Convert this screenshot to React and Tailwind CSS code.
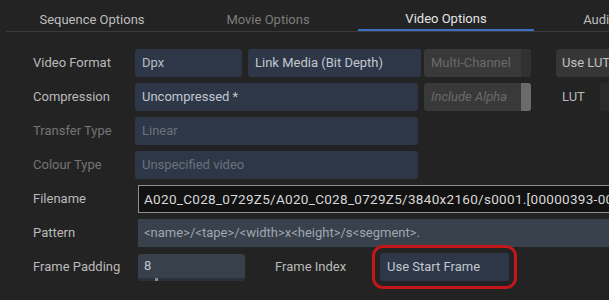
import React from 'react'

const font = { fontFamily: 'Roboto, "Noto Sans", sans-serif' }

const tabs = [
  { label: 'Sequence Options', cls: 'text-[#bdbdbd]' },
  { label: 'Movie Options', cls: 'text-[#7c7c7c]' },
  { label: 'Video Options', cls: 'text-[#e4e4e4]', active: true },
  { label: 'Audio Options', cls: 'text-[#bdbdbd]' },
]

const Label = ({ children, dim = false }) => (
  <div className={`w-[102px] shrink-0 text-[13px] ${dim ? 'text-[#747474]' : 'text-[#bababa]'}`}>
    {children}
  </div>
)

const Field = ({ children, className = '', text = 'text-[#b6bcc4]' }) => (
  <div className={`h-[28px] shrink-0 rounded-[3px] bg-[#2d3747] flex items-center px-[7px] text-[13px] ${text} ${className}`}>
    {children}
  </div>
)

const Toggle = ({ children, italic = false, light = false }) => (
  <div className="h-[28px] w-[107px] shrink-0 rounded-[3px] bg-[#393939] flex overflow-hidden">
    <div className={`flex-1 flex items-center px-[7px] text-[13px] text-[#6a6a6a] ${italic ? 'italic' : ''}`}>
      {children}
    </div>
    <div className={`w-[10px] ${light ? 'bg-[#6b6b6b]' : 'bg-[#313131]'}`} />
  </div>
)

const Row = ({ children }) => (
  <div className="flex items-center h-[28px] pl-[33px] whitespace-nowrap">{children}</div>
)

export default function App() {
  return (
    <div className="w-[609px] h-[300px] bg-[#232323] overflow-hidden" style={font}>
      {/* tab strip */}
      <div className="flex h-[32px] ml-[6px] border-b border-[#3a3a3a] whitespace-nowrap">
        {tabs.map((t) => (
          <div
            key={t.label}
            className={`w-[176px] shrink-0 flex items-center justify-center pt-[8px] text-[13px] ${t.cls} ${
              t.active ? 'border-b-2 border-[#3c6fc2] mx-[2px] w-[172px]' : ''
            } ${t.label === 'Sequence Options' ? '-ml-[2px]' : ''}`}
          >
            {t.label}
          </div>
        ))}
      </div>

      <div className="flex flex-col gap-[6px] pt-[17px]">
        <Row>
          <Label>Video Format</Label>
          <Field className="w-[107px]">Dpx</Field>
          <Field className="w-[173px] ml-[6px] px-[6px]" text="text-[#c2c7cf]">Link Media (Bit Depth)</Field>
          <div className="ml-[3px]">
            <Toggle>Multi-Channel</Toggle>
          </div>
          <div className="ml-[25px] h-[28px] w-[90px] shrink-0 rounded-[3px] bg-[#363636] flex items-center px-[6px] text-[13px] text-[#c2c2c2]">
            Use LUT
          </div>
        </Row>

        <Row>
          <Label>Compression</Label>
          <Field className="w-[283px]" text="text-[#c2c7cf]">Uncompressed *</Field>
          <div className="ml-[6px]">
            <Toggle italic light>Include Alpha</Toggle>
          </div>
          <div className="ml-[31px] w-[38px] shrink-0 text-[13px] text-[#bababa]">LUT</div>
          <div className="h-[28px] w-[40px] shrink-0 rounded-[3px] bg-[#2a2a2a]" />
        </Row>

        <Row>
          <Label dim>Transfer Type</Label>
          <Field className="w-[283px]" text="text-[#6a727d]">Linear</Field>
        </Row>

        <Row>
          <Label dim>Colour Type</Label>
          <Field className="w-[283px]" text="text-[#6a727d]">Unspecified video</Field>
        </Row>

        <Row>
          <Label>Filename</Label>
          <div className="ml-[3px] h-[28px] w-[480px] shrink-0 bg-[#121212] border border-[#8e8e8e] flex items-center px-[5px] overflow-hidden text-[13.5px] tracking-[0.3px] text-[#d8d8d8]">
            A020_C028_0729Z5/A020_C028_0729Z5/3840x2160/s0001.[00000393-00000500].dpx
          </div>
        </Row>

        <Row>
          <Label>Pattern</Label>
          <div className="ml-[3px] h-[28px] w-[480px] shrink-0 bg-[#38414c] flex items-center px-[6px] text-[13px] text-[#a0a7b0]">
            &lt;name&gt;/&lt;tape&gt;/&lt;width&gt;x&lt;height&gt;/s&lt;segment&gt;.
          </div>
        </Row>

        <Row>
          <Label>Frame Padding</Label>
          <div className="ml-[3px] h-[27px] w-[107px] shrink-0 rounded-[3px] bg-[#37404b] flex flex-col overflow-hidden">
            <div className="flex-1 flex items-center px-[6px] text-[13px] text-[#c2c7cf]">8</div>
            <div className="h-[3px] bg-[#29313b] flex">
              <div className="ml-[17px] w-[3px] bg-[#8a8a8a]" />
            </div>
          </div>
          <div className="ml-[30px] w-[105px] shrink-0 text-[13px] text-[#bababa]">Frame Index</div>
          <Field
            className="w-[129px] outline-[3px] outline-solid outline-[#c4171c] outline-offset-[5px] rounded-[3px]"
            text="text-[#c2c7cf]"
          >
            Use Start Frame
          </Field>
        </Row>
      </div>
    </div>
  )
}
